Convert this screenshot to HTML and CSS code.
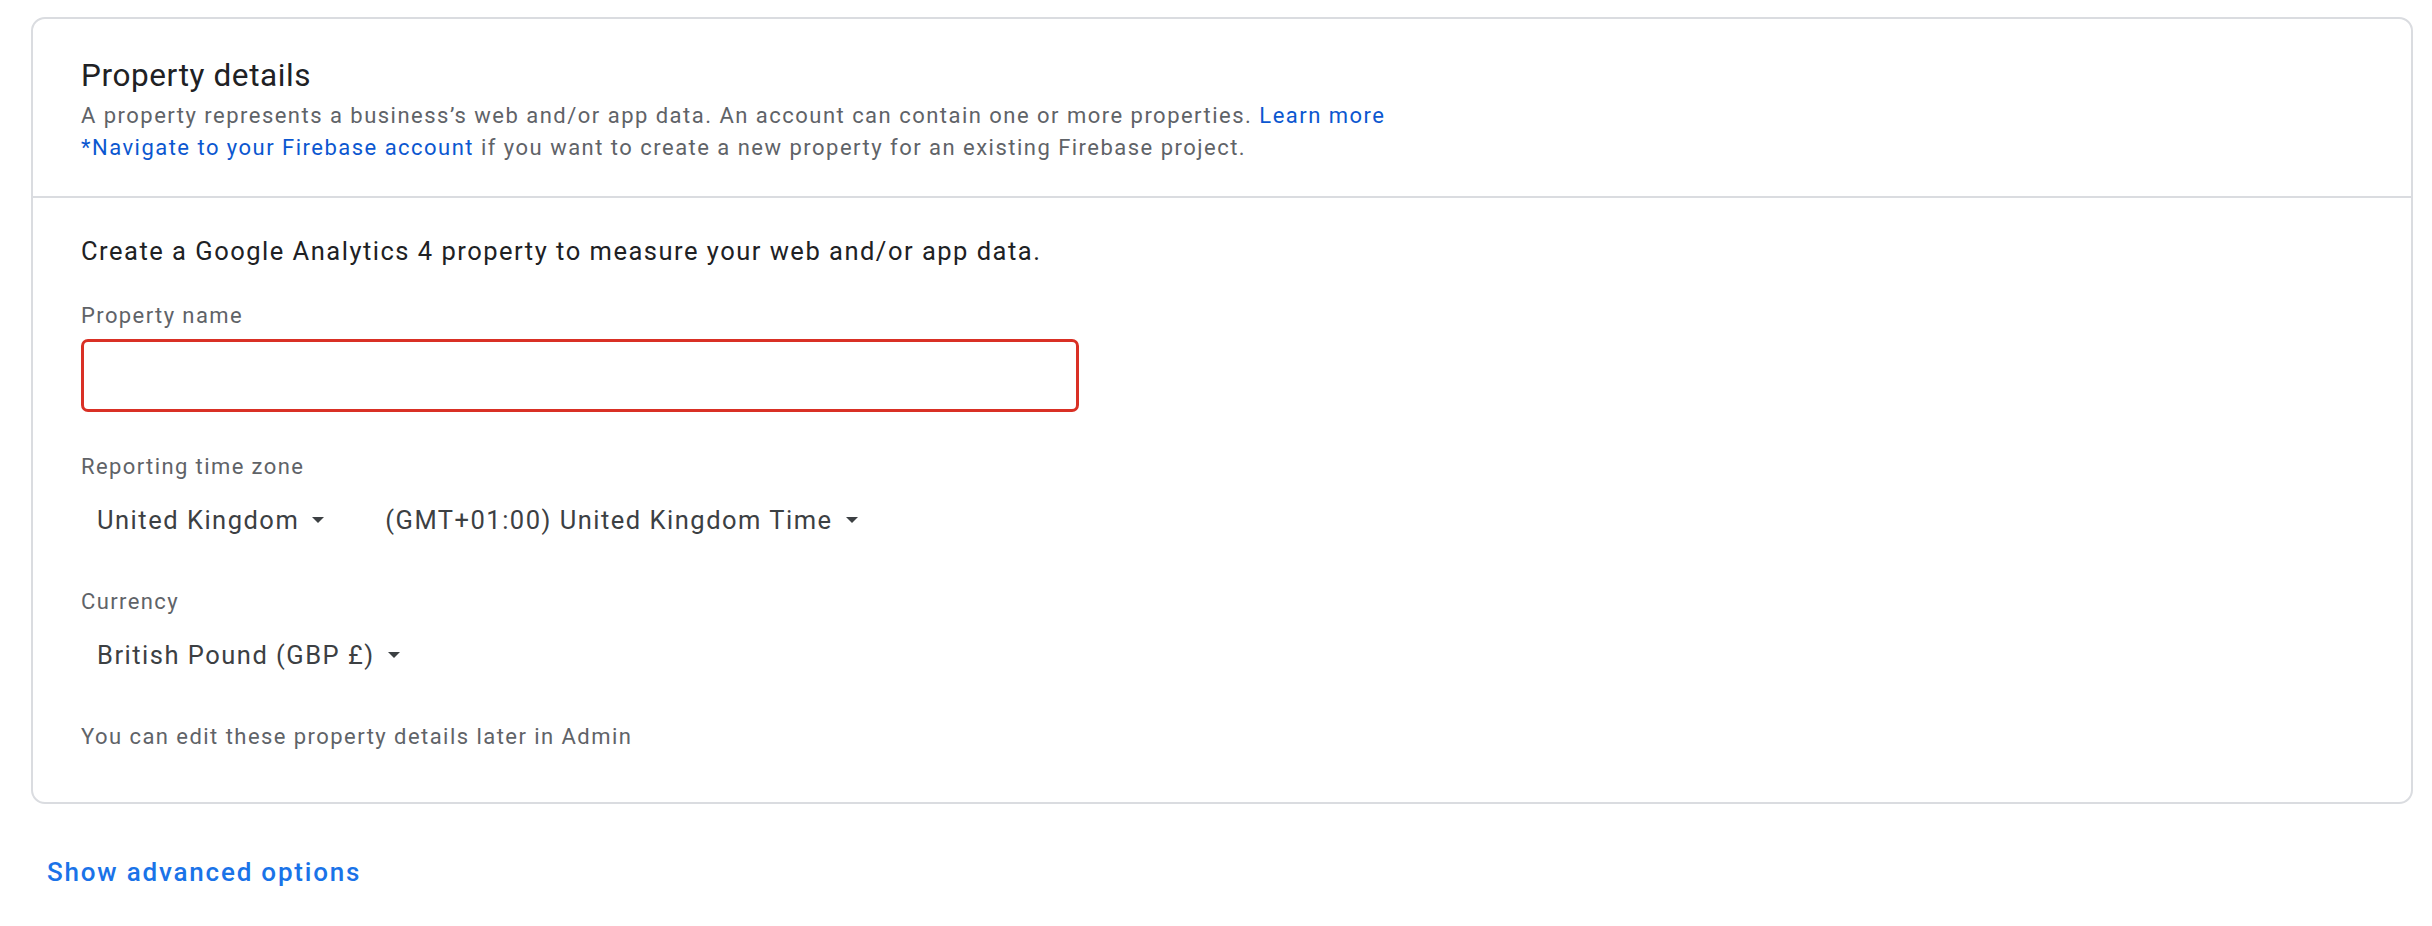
FILE: index.html
```html
<!DOCTYPE html>
<html lang="en">
<head>
  <meta charset="UTF-8">
  <title>Property details</title>
  <link rel="stylesheet" href="styles.css">
</head>
<body>

<div class="property-card">
  <div class="card-header">
    <h2 class="card-title">Property details</h2>
    <p class="card-subtitle">
      A property represents a business’s web and/or app data. An account can contain one or more properties. <a href="#" class="link">Learn more</a><br>
      <a href="#" class="link">*Navigate to your Firebase account</a> if you want to create a new property for an existing Firebase project.
    </p>
  </div>

  <div class="card-body">
    <p class="intro">Create a Google Analytics 4 property to measure your web and/or app data.</p>

    <label class="field-label" for="propertyName">Property name</label>
    <input id="propertyName" class="text-input invalid" type="text">

    <div class="field-label spaced">Reporting time zone</div>
    <div class="select-row">
      <button class="select-btn">United Kingdom <span class="caret"></span></button>
      <button class="select-btn">(GMT+01:00) United Kingdom Time <span class="caret"></span></button>
    </div>

    <div class="field-label spaced after-select">Currency</div>
    <div class="select-row">
      <button class="select-btn">British Pound (GBP £) <span class="caret"></span></button>
    </div>

    <p class="hint">You can edit these property details later in Admin</p>
  </div>
</div>

<a href="#" class="advanced-link">Show advanced options</a>

</body>
</html>
```

FILE: styles.css
```css
:root {
  --border: #dadce0;
  --text: #202124;
  --text-secondary: #5f6368;
  --text-select: #3c4043;
  --link: #0b57d0;
  --link-bright: #1a73e8;
  --error: #d93025;
  --font: Roboto, 'Liberation Sans', Arial, sans-serif;
}

body {
  margin: 0;
  background: #fff;
  font-family: var(--font);
  color: var(--text);
}

.property-card {
  margin: 17px 19px 0 31px;
  border: 2px solid var(--border);
  border-radius: 14px;
}

.card-header {
  padding: 37px 48px 32px 48px;
  border-bottom: 2px solid var(--border);
}

.card-title {
  margin: 0 0 4px 0;
  font-size: 31.5px;
  line-height: 40px;
  font-weight: 400;
  letter-spacing: 0.6px;
  color: #202124;
}

.card-subtitle {
  margin: 0;
  font-size: 22px;
  line-height: 32px;
  letter-spacing: 1.48px;
  color: var(--text-secondary);
}

.link {
  color: var(--link);
  text-decoration: none;
}

.card-body {
  padding: 35px 48px 49px 48px;
  display: flex;
  flex-direction: column;
  align-items: flex-start;
}

.intro {
  margin: 0 0 31px 0;
  font-size: 25.5px;
  line-height: 36px;
  letter-spacing: 1.5px;
  color: var(--text);
}

.field-label {
  display: block;
  font-size: 22px;
  line-height: 32px;
  letter-spacing: 1.4px;
  color: var(--text-secondary);
  margin-bottom: 7px;
}
.field-label.spaced {
  margin-top: 39px;
  margin-bottom: 19px;
}
.field-label.after-select {
  margin-top: 48px;
}

.text-input {
  box-sizing: border-box;
  width: 998px;
  height: 73px;
  border-radius: 7px;
  border: 3px solid var(--border);
  outline: none;
  padding: 0 20px;
  font-family: var(--font);
  font-size: 25px;
}
.text-input.invalid {
  border-color: var(--error);
}

.select-row {
  display: flex;
  gap: 45px;
}

.select-btn {
  display: flex;
  align-items: center;
  gap: 13px;
  background: transparent;
  border: none;
  padding: 0 0 0 16px;
  font-family: var(--font);
  font-size: 25.5px;
  line-height: 36px;
  letter-spacing: 1.5px;
  color: var(--text-select);
  cursor: pointer;
}

.caret {
  width: 0;
  height: 0;
  border-left: 6.5px solid transparent;
  border-right: 6.5px solid transparent;
  border-top: 6.5px solid var(--text-select);
}

.hint {
  margin: 48px 0 0 0;
  font-size: 22px;
  line-height: 32px;
  letter-spacing: 1.45px;
  color: var(--text-secondary);
}

.advanced-link {
  display: inline-block;
  margin: 50px 0 0 47px;
  font-size: 26px;
  line-height: 36px;
  font-weight: 500;
  letter-spacing: 1.8px;
  color: var(--link-bright);
  text-decoration: none;
}
```
